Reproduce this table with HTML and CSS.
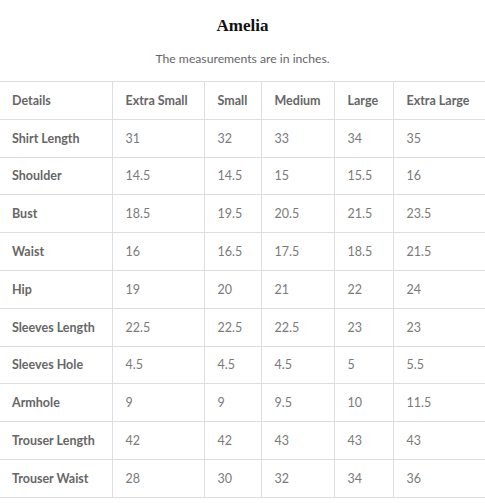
FILE: index.html
```html
<!DOCTYPE html>
<html>
<head>
<meta charset="utf-8">
<link rel="stylesheet" href="styles.css">
</head>
<body>
<div class="page">
  <h1 class="title">Amelia</h1>
  <p class="subtitle">The measurements are in inches.</p>
  <table class="sizes">
    <colgroup>
      <col class="c1"><col class="c2"><col class="c3"><col class="c4"><col class="c5"><col class="c6">
    </colgroup>
    <thead>
      <tr><th>Details</th><th>Extra Small</th><th>Small</th><th>Medium</th><th>Large</th><th>Extra Large</th></tr>
    </thead>
    <tbody>
      <tr><th>Shirt Length</th><td>31</td><td>32</td><td>33</td><td>34</td><td>35</td></tr>
      <tr><th>Shoulder</th><td>14.5</td><td>14.5</td><td>15</td><td>15.5</td><td>16</td></tr>
      <tr><th>Bust</th><td>18.5</td><td>19.5</td><td>20.5</td><td>21.5</td><td>23.5</td></tr>
      <tr><th>Waist</th><td>16</td><td>16.5</td><td>17.5</td><td>18.5</td><td>21.5</td></tr>
      <tr><th>Hip</th><td>19</td><td>20</td><td>21</td><td>22</td><td>24</td></tr>
      <tr><th>Sleeves Length</th><td>22.5</td><td>22.5</td><td>22.5</td><td>23</td><td>23</td></tr>
      <tr><th>Sleeves Hole</th><td>4.5</td><td>4.5</td><td>4.5</td><td>5</td><td>5.5</td></tr>
      <tr><th>Armhole</th><td>9</td><td>9</td><td>9.5</td><td>10</td><td>11.5</td></tr>
      <tr><th>Trouser Length</th><td>42</td><td>42</td><td>43</td><td>43</td><td>43</td></tr>
      <tr><th>Trouser Waist</th><td>28</td><td>30</td><td>32</td><td>34</td><td>36</td></tr>
    </tbody>
  </table>
</div>
</body>
</html>
```
FILE: styles.css
```css
html, body {
  margin: 0;
  padding: 0;
  background: #ffffff;
}
.page {
  width: 485px;
  padding-top: 14px;
  font-family: "Lato", "Open Sans", sans-serif;
}
.title {
  margin: 0;
  text-align: center;
  font-family: "Liberation Serif", serif;
  font-weight: 600;
  font-size: 17px;
  line-height: 24px;
  color: #111;
}
.subtitle {
  margin: 13px 0 0 0;
  text-align: center;
  font-size: 12.2px;
  line-height: 16px;
  color: #666;
}
.sizes {
  margin-top: 14px;
  width: 486px;
  border-collapse: collapse;
  table-layout: fixed;
  font-size: 12.5px;
}
.c1 { width: 112px; }
.c2 { width: 92px; }
.c3 { width: 57px; }
.c4 { width: 73px; }
.c5 { width: 59px; }
.c6 { width: 93px; }
.sizes tr {
  height: 37.8px;
}
.sizes th, .sizes td {
  border: 1px solid #dedede;
  padding: 0 0 0 13px;
  text-align: left;
  vertical-align: middle;
  white-space: nowrap;
}
.sizes th {
  font-weight: 700;
  color: #666;
}
.sizes td {
  font-weight: 400;
  color: #7a7a7a;
}
.sizes tr > :first-child {
  border-left: none;
  padding-left: 12px;
}
```
